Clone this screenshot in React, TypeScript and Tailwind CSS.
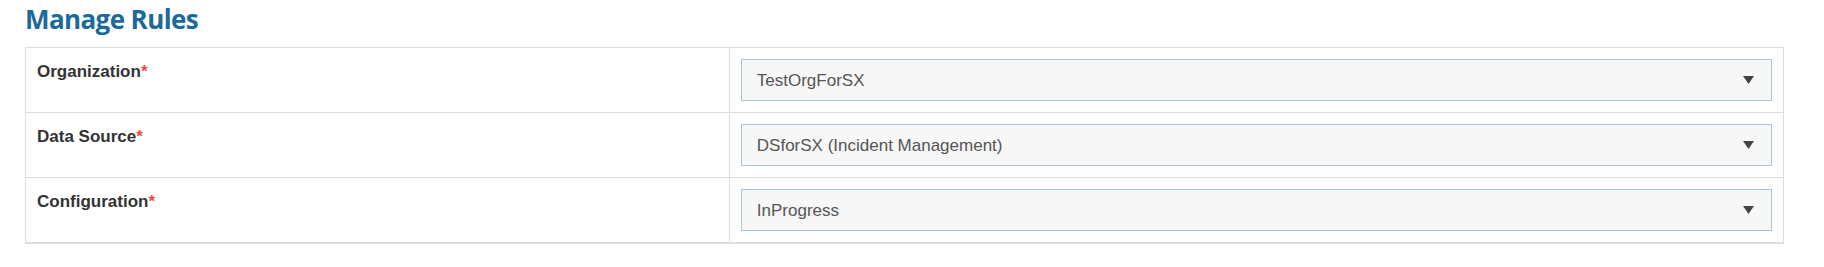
import React from "react";

type Field = {
  label: string;
  value: string;
};

const fields: Field[] = [
  { label: "Organization", value: "TestOrgForSX" },
  { label: "Data Source", value: "DSforSX (Incident Management)" },
  { label: "Configuration", value: "InProgress" },
];

const SelectBox = ({ value }: { value: string }) => {
  return (
    <div className="flex items-center justify-between h-[42px] border border-[#a5c7d6] bg-[#f7f7f7] pl-[15px] pr-[17px]">
      <span className="text-[17px] text-[#555] leading-none">{value}</span>
      {/* Caret */}
      <svg width="11" height="8" viewBox="0 0 11 8" className="block">
        <polygon points="0,0 11,0 5.5,8" fill="#444" />
      </svg>
    </div>
  );
};

const App = () => {
  return (
    <div className="bg-white h-[267px] pl-[25px] pr-[40px] font-['Liberation_Sans',Arial,sans-serif]">
      {/* Page Title */}
      <h1 className="font-['Open_Sans',sans-serif] font-bold text-[26px] tracking-[-0.6px] leading-[34px] text-[#1b6a99] pt-[2px]">
        Manage Rules
      </h1>
      {/* Rules Table */}
      <div className="mt-[11px] border border-[#ddd] border-b-2">
        {fields.map((f, i) => (
          <div
            key={f.label}
            className={`grid grid-cols-[40%_60%] ${
              i < fields.length - 1 ? "border-b border-[#ddd]" : ""
            }`}
          >
            <div className="px-[11px] pt-[12px] pb-[11px]">
              <span className="text-[17px] font-bold text-[#333] leading-[24px]">
                {f.label}
                <span className="text-[#e74c3c] font-bold">*</span>
              </span>
            </div>
            <div className="border-l border-[#ddd] px-[11px] py-[11px]">
              <SelectBox value={f.value} />
            </div>
          </div>
        ))}
      </div>
    </div>
  );
};

export default App;
